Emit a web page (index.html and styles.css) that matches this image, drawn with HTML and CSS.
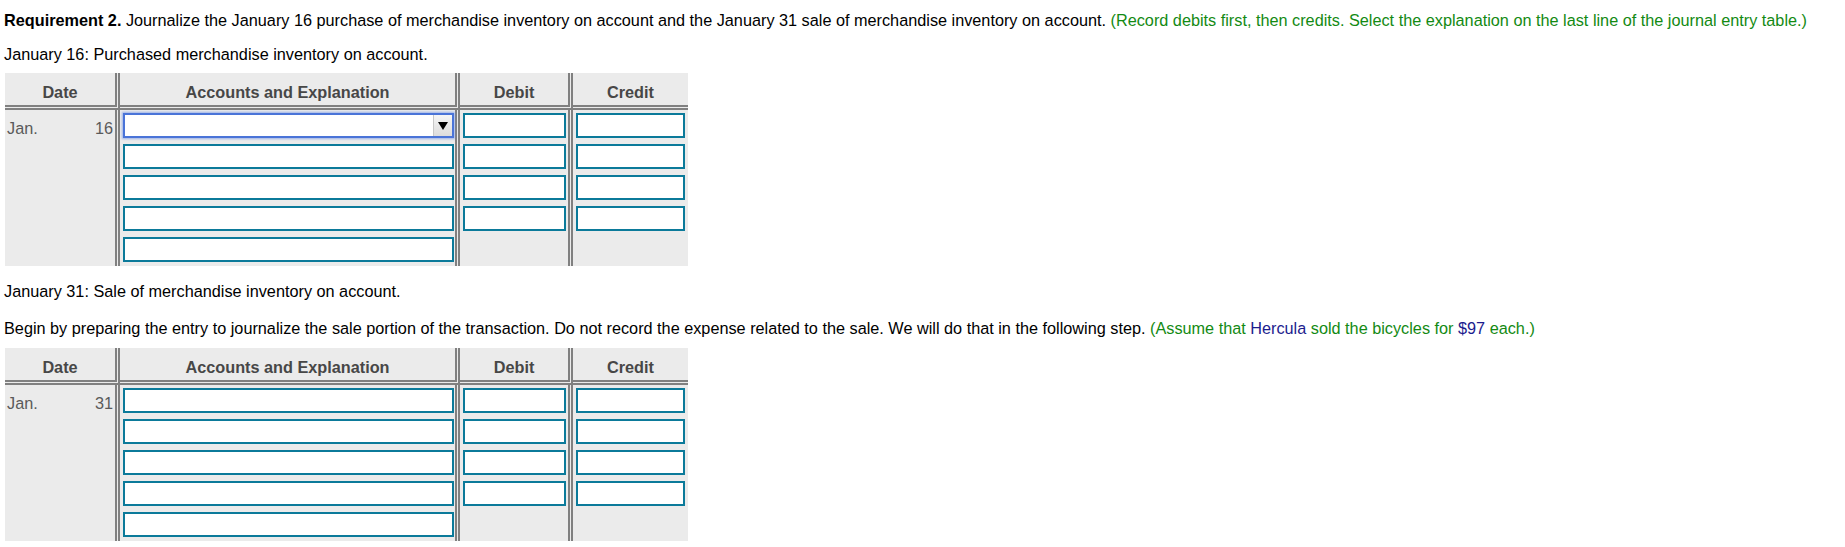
FILE: index.html
```html
<!DOCTYPE html>
<html>
<head>
<meta charset="utf-8">
<link rel="stylesheet" href="styles.css">
</head>
<body>
<div class="page">
  <p class="line line-req"><b>Requirement 2.</b> Journalize the January 16 purchase of merchandise inventory on account and the January 31 sale of merchandise inventory on account. <span class="hint">(Record debits first, then credits. Select the explanation on the last line of the journal entry table.)</span></p>
  <p class="line line-jan16">January 16: Purchased merchandise inventory on account.</p>

  <div class="journal journal-first">
    <div class="hd c-date">Date</div>
    <div class="hd c-acct">Accounts and Explanation</div>
    <div class="hd c-debit">Debit</div>
    <div class="hd c-credit">Credit</div>

    <div class="bd c-date"><div class="datecell"><span>Jan.</span><span>16</span></div></div>
    <div class="bd c-acct">
      <div class="select"><div class="select-btn"><span class="tri"></span></div></div>
      <div class="inp"></div>
      <div class="inp"></div>
      <div class="inp"></div>
      <div class="inp"></div>
    </div>
    <div class="bd c-debit">
      <div class="inp"></div>
      <div class="inp"></div>
      <div class="inp"></div>
      <div class="inp"></div>
    </div>
    <div class="bd c-credit">
      <div class="inp"></div>
      <div class="inp"></div>
      <div class="inp"></div>
      <div class="inp"></div>
    </div>
  </div>

  <p class="line line-jan31">January 31: Sale of merchandise inventory on account.</p>
  <p class="line line-begin">Begin by preparing the entry to journalize the sale portion of the transaction. Do not record the expense related to the sale. We will do that in the following step. <span class="hint">(Assume that <span class="var">Hercula</span> sold the bicycles for <span class="var">$97</span> each.)</span></p>

  <div class="journal journal-second">
    <div class="hd c-date">Date</div>
    <div class="hd c-acct">Accounts and Explanation</div>
    <div class="hd c-debit">Debit</div>
    <div class="hd c-credit">Credit</div>

    <div class="bd c-date"><div class="datecell"><span>Jan.</span><span>31</span></div></div>
    <div class="bd c-acct">
      <div class="inp"></div>
      <div class="inp"></div>
      <div class="inp"></div>
      <div class="inp"></div>
      <div class="inp"></div>
    </div>
    <div class="bd c-debit">
      <div class="inp"></div>
      <div class="inp"></div>
      <div class="inp"></div>
      <div class="inp"></div>
    </div>
    <div class="bd c-credit">
      <div class="inp"></div>
      <div class="inp"></div>
      <div class="inp"></div>
      <div class="inp"></div>
    </div>
  </div>
</div>
</body>
</html>
```

FILE: styles.css
```css
* { box-sizing: border-box; }

html, body {
  margin: 0;
  padding: 0;
  background: #ffffff;
}

.page {
  padding: 10px 0 0 4px;
  font-family: "Liberation Sans", Arial, sans-serif;
  color: #000;
}

.line {
  margin: 0;
  font-size: 16.25px;
  line-height: 20px;
  white-space: nowrap;
}

.line b { font-weight: bold; }

.line-jan16 { margin-top: 14px; }
.line-jan31 { margin-top: 15px; }
.line-begin { margin-top: 17px; }

.hint { color: #138a13; }
.var { color: #1c1c8e; }

.journal {
  display: grid;
  grid-template-columns: 115px 340px 113px 115px;
  width: 683px;
  margin-left: 1px;
  background: #ebebeb;
}

.journal-first { margin-top: 9px; }
.journal-second { margin-top: 10px; }

.hd {
  height: 37px;
  padding-top: 9px;
  line-height: 20px;
  font-size: 16.25px;
  font-weight: bold;
  color: #474747;
  text-align: center;
  border-bottom: 5px double #808080;
}

.c-date, .c-acct, .c-debit {
  border-right: 5px double #808080;
}

.bd {
  height: 156px;
  padding: 3px 2px 0 3px;
  display: flex;
  flex-direction: column;
  gap: 6px;
}

.bd.c-acct { padding-right: 1px; }
.bd.c-credit { padding-right: 3px; }

.datecell {
  display: flex;
  justify-content: space-between;
  padding: 5px 0 0 0;
  margin-left: -1px;
  font-size: 16.25px;
  line-height: 20px;
  color: #5a5a5a;
}

.inp {
  height: 25px;
  background: #fff;
  border: 2px solid #0b7a9a;
  flex: none;
}

.select {
  height: 25px;
  flex: none;
  background: #fff;
  border: 2px solid #4a74d8;
  box-shadow: 0 0 2px 1px rgba(90, 130, 230, 0.55);
  display: flex;
  justify-content: flex-end;
}

.select-btn {
  width: 19px;
  height: 100%;
  background: linear-gradient(#f6f6f6, #dcdcdc);
  border-left: 1px solid #c8c8c8;
  display: flex;
  align-items: center;
  justify-content: center;
}

.tri {
  width: 0;
  height: 0;
  border-left: 5px solid transparent;
  border-right: 5px solid transparent;
  border-top: 8px solid #000;
  margin-top: 1px;
}
```
